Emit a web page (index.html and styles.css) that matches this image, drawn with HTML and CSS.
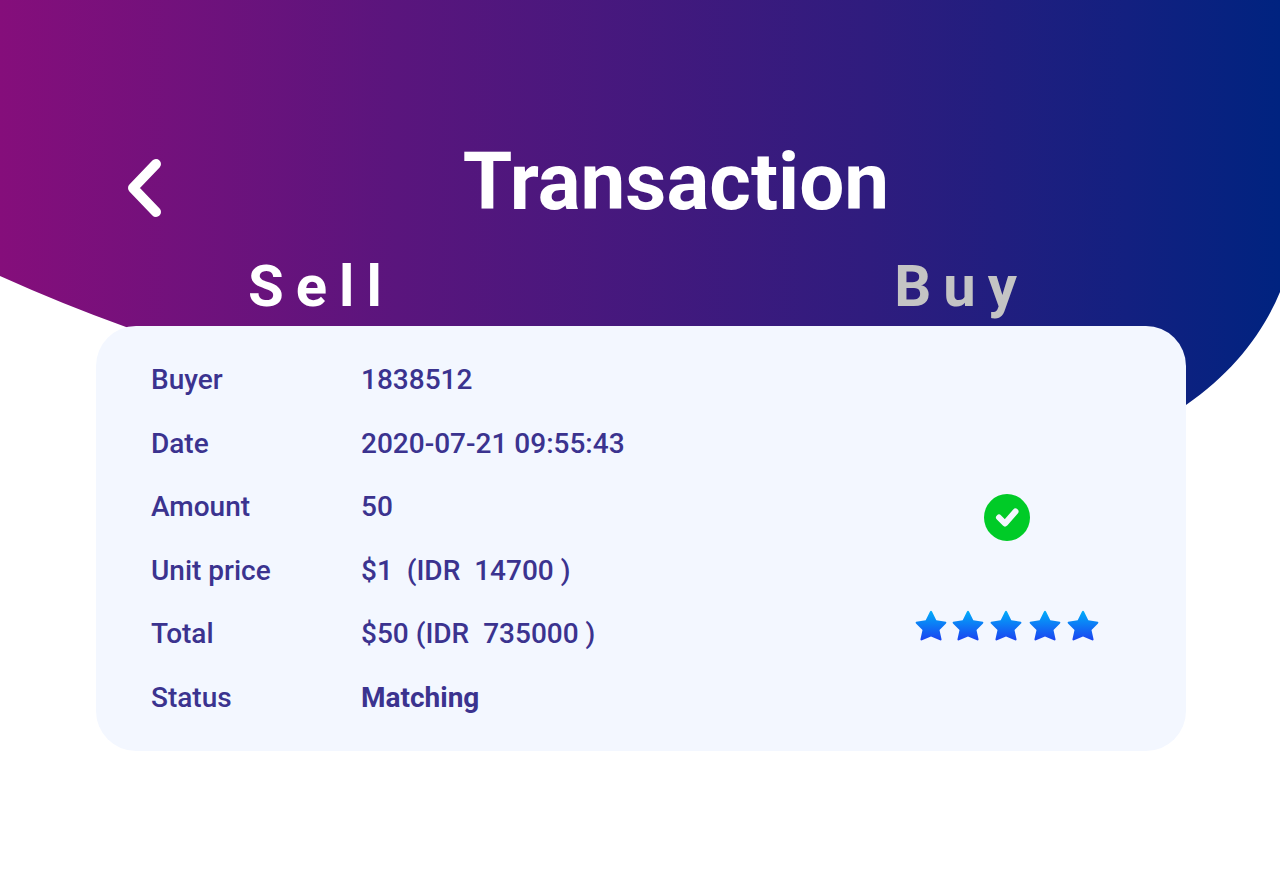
FILE: index.html
```html
<!DOCTYPE html>
<html lang="en">
<head>
<meta charset="utf-8">
<meta name="viewport" content="width=device-width, initial-scale=1">
<title>Transaction</title>
<link rel="stylesheet" href="styles.css">
</head>
<body>
<div class="page">
  <svg class="backdrop" viewBox="0 0 1280 480" preserveAspectRatio="none" aria-hidden="true">
    <defs>
      <linearGradient id="sky" x1="0" y1="0" x2="1" y2="0">
        <stop offset="0" stop-color="#850e7b"/>
        <stop offset="0.31" stop-color="#5a157d"/>
        <stop offset="0.68" stop-color="#2f1c7e"/>
        <stop offset="0.88" stop-color="#132080"/>
        <stop offset="1" stop-color="#002380"/>
      </linearGradient>
    </defs>
    <path fill="url(#sky)" d="M0 0H1280V292C1262 335 1232 373 1186 405C1080 475 960 480 800 480C560 480 330 414 126 327Q62 304 0 276Z"/>
  </svg>
  <header class="header">
    <button class="back" type="button" aria-label="Back">
      <svg width="34" height="58" viewBox="0 0 34 58" aria-hidden="true"><path d="M28 5L5 29L28 53" fill="none" stroke="#fff" stroke-width="10" stroke-linecap="round" stroke-linejoin="round"/></svg>
    </button>
    <h1 class="title">Transaction</h1>
  </header>
  <nav class="tabs" aria-label="Transaction type">
    <button class="tab tab-active" type="button">Sell</button>
    <button class="tab" type="button">Buy</button>
  </nav>
  <main class="card">
    <dl class="details">
      <dt>Buyer</dt><dd>1838512</dd>
      <dt>Date</dt><dd>2020-07-21 09:55:43</dd>
      <dt>Amount</dt><dd>50</dd>
      <dt>Unit price</dt><dd>$1 &nbsp;(IDR &nbsp;14700 )</dd>
      <dt>Total</dt><dd>$50 (IDR &nbsp;735000 )</dd>
      <dt>Status</dt><dd class="status">Matching</dd>
    </dl>
    <div class="feedback">
      <svg class="check" width="46" height="47" viewBox="0 0 46 47" role="img" aria-label="Verified"><ellipse cx="23" cy="23.5" rx="23" ry="23.5" fill="#00cb27"/><path d="M15 23.500L21 29.500L31.500 17.500" fill="none" stroke="#f3f7ff" stroke-width="6" stroke-linecap="round" stroke-linejoin="round"/></svg>
      <svg class="stars" width="184" height="32" viewBox="0 0 184 32" role="img" aria-label="5 out of 5 stars">
        <defs>
          <linearGradient id="blue" x1="0" y1="0" x2="0" y2="1"><stop offset="0" stop-color="#00adfa"/><stop offset="1" stop-color="#1b43f0"/></linearGradient>
          <path id="star" fill="url(#blue)" d="M15 1.500Q16 0.200 17 1.500L21.300 10.200L30.800 11.800Q32 12.500 31 13.500L24.500 20L26.600 29.500Q26.300 30.800 25 30.300L16 26.600L7 30.300Q5.700 30.800 5.400 29.500L7.500 20L1 13.500Q0 12.500 1.200 11.800L10.700 10.200Z"/>
        </defs>
        <use href="#star" x="0"/><use href="#star" x="37"/><use href="#star" x="75"/><use href="#star" x="114"/><use href="#star" x="152"/>
      </svg>
    </div>
  </main>
</div>
</body>
</html>
```
FILE: styles.css
```css
* { box-sizing: border-box; }
body {
  margin: 0;
  background: #fff;
  color: #3b338f;
  font-family: Roboto, "Liberation Sans", sans-serif;
}
button {
  padding: 0;
  border: 0;
  background: none;
  font: inherit;
  cursor: pointer;
}
.page {
  position: relative;
  padding: 134px 94px 122px 96px;
}
.backdrop {
  position: absolute;
  top: 0;
  left: 0;
  z-index: -1;
  width: 100%;
  height: 480px;
}
.header {
  display: grid;
  grid-template-columns: 98px 1fr 28px;
  align-items: center;
  height: 96px;
}
.back {
  padding: 12px 0 0 32px;
  justify-self: start;
}
.back svg { display: block; }
.title {
  margin: 0;
  color: #fff;
  font-size: 80px;
  line-height: 96px;
  font-weight: 700;
  text-align: center;
}
.tabs {
  display: flex;
  justify-content: space-between;
  padding: 23px 157px 6px 152px;
}
.tab {
  color: #c4c4c4;
  font-size: 58px;
  line-height: 67px;
  font-weight: 700;
  letter-spacing: 12px;
}
.tab-active { color: #fff; }
.card {
  display: flex;
  justify-content: space-between;
  min-height: 425px;
  padding: 22px 87px 22px 55px;
  border-radius: 40px;
  background: #f3f7ff;
}
.details {
  display: grid;
  grid-template-columns: 210px auto;
  grid-auto-rows: 1fr;
  align-items: center;
  margin: 0;
  font-size: 28px;
  line-height: 33px;
  font-weight: 500;
}
.details dd { margin: 0; }
.details .status { font-weight: 700; }
.feedback {
  display: flex;
  flex-direction: column;
  align-items: center;
  gap: 69px;
  padding-top: 146px;
}
```
